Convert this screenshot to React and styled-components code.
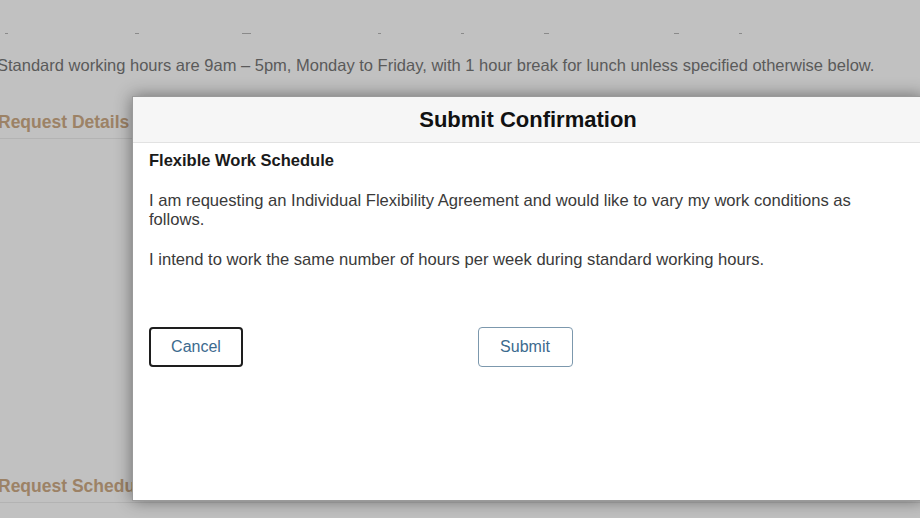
import React from 'react';
import styled, { createGlobalStyle } from 'styled-components';

const GlobalStyle = createGlobalStyle`
  html, body {
    margin: 0;
    padding: 0;
    background: #c1c1c1;
    font-family: 'Liberation Sans', Arial, sans-serif;
    overflow: hidden;
  }
`;

const Page = styled.div`
  position: relative;
  width: 920px;
  height: 518px;
  overflow: hidden;
  background: #c1c1c1;
`;

const DashRow = styled.div`
  display: flex;
  padding-top: 33px;
  height: 3px;
`;

const Dash = styled.span`
  display: block;
  width: ${p => p.w || 4}px;
  height: 1px;
  margin-left: ${p => p.gap}px;
  background: #8a8a8a;
`;

const Intro = styled.p`
  margin: 19px 0 0 -3px;
  font-size: 16.5px;
  line-height: 20px;
  color: #5a5a5a;
  white-space: nowrap;
`;

const SectionTitle = styled.h3`
  margin: ${p => p.top}px 0 0 -2px;
  padding-bottom: 5px;
  font-size: 17.5px;
  line-height: 21px;
  font-weight: 700;
  color: #9c8266;
  border-bottom: 1px solid #b3b3b3;
  white-space: nowrap;
`;

const Modal = styled.div`
  position: absolute;
  left: 132px;
  top: 96px;
  width: 792px;
  height: 405px;
  background: #fff;
  border: 1px solid #9a9a9a;
  box-sizing: border-box;
  box-shadow: 0 0 16px rgba(0, 0, 0, 0.45);
  display: flex;
  flex-direction: column;
`;

const ModalHeader = styled.div`
  height: 45px;
  display: flex;
  align-items: center;
  justify-content: center;
  background: #f6f6f6;
  border-bottom: 1px solid #e2e2e2;
  font-size: 22px;
  font-weight: 700;
  color: #111;
`;

const ModalBody = styled.div`
  padding: 8px 16px 0;
  color: #333;
`;

const Heading = styled.div`
  font-size: 16.5px;
  font-weight: 700;
  line-height: 19px;
  color: #1a1a1a;
`;

const Text = styled.p`
  margin: ${p => p.top}px 0 0;
  font-size: 16.6px;
  line-height: 19px;
  color: #3a3a3a;
  max-width: 730px;
`;

const ButtonBar = styled.div`
  display: grid;
  grid-template-columns: 1fr auto 1fr;
  align-items: center;
  margin-top: 58px;
`;

const Button = styled.button`
  justify-self: ${p => (p.center ? 'center' : 'start')};
  margin-left: ${p => (p.center ? '-6px' : '0')};
  height: 40px;
  width: ${p => p.w}px;
  background: #fff;
  border: ${p => (p.focused ? '2px solid #1e1e1e' : '1px solid #7c98ad')};
  border-radius: 4px;
  font-family: 'Liberation Sans', Arial, sans-serif;
  font-size: 16px;
  color: #3c6a8e;
  padding: 0;
  cursor: pointer;
`;

export default function App() {
  return (
    <Page>
      <GlobalStyle />
      <DashRow>
        <Dash gap={5} w={3} />
        <Dash gap={127} w={4} />
        <Dash gap={103} w={9} />
        <Dash gap={127} w={3} />
        <Dash gap={80} w={3} />
        <Dash gap={80} w={5} />
        <Dash gap={125} w={5} />
        <Dash gap={60} w={3} />
      </DashRow>
      <Intro>
        Standard working hours are 9am – 5pm, Monday to Friday, with 1 hour break for lunch unless specified otherwise below.
      </Intro>
      <SectionTitle top={37}>Request Details</SectionTitle>
      <SectionTitle top={337}>Request Schedule</SectionTitle>

      <Modal role="dialog">
        <ModalHeader>Submit Confirmation</ModalHeader>
        <ModalBody>
          <Heading>Flexible Work Schedule</Heading>
          <Text top={21}>
            I am requesting an Individual Flexibility Agreement and would like to vary my work conditions as follows.
          </Text>
          <Text top={21}>
            I intend to work the same number of hours per week during standard working hours.
          </Text>
          <ButtonBar>
            <Button w={94} focused>Cancel</Button>
            <Button w={95} center>Submit</Button>
            <span />
          </ButtonBar>
        </ModalBody>
      </Modal>
    </Page>
  );
}
